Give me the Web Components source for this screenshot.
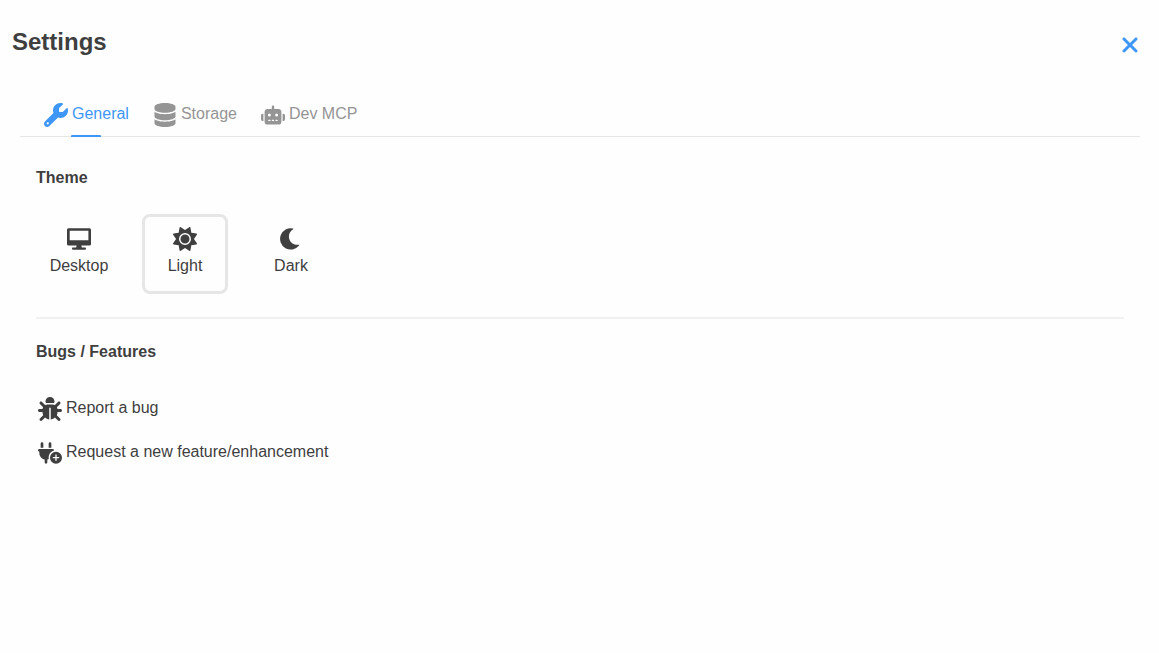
<!DOCTYPE html>
<html lang="en">
<head>
<meta charset="utf-8">
<title>Settings</title>
<style>
  body {
    margin: 0;
    background: #fefefe;
    color: #3f3f3f;
    font: 16px/24px "Liberation Sans", Arial, sans-serif;
    --primary: #3e97f6;
    --muted: #959595;
    --line: #e6e6e6;
    --line-soft: #f1f1f1;
  }
</style>
</head>
<body>
<settings-dialog heading="Settings">
  <tab-bar slot="tabs">
    <tab-item icon="wrench" active>General</tab-item>
    <tab-item icon="database">Storage</tab-item>
    <tab-item icon="robot">Dev MCP</tab-item>
  </tab-bar>
  <settings-section heading="Theme">
    <theme-picker value="light"></theme-picker>
  </settings-section>
  <settings-section heading="Bugs / Features">
    <icon-link icon="bug" href="#bug">Report a bug</icon-link>
    <icon-link icon="plug" href="#feature">Request a new feature/enhancement</icon-link>
  </settings-section>
</settings-dialog>

<script>
// name: [viewBox, path]
const icons = {
  wrench: ['0 0 512 512', 'M352 320c88.4 0 160-71.6 160-160c0-15.3-2.2-30.1-6.2-44.2c-3.1-10.8-16.4-13.2-24.3-5.3l-76.8 76.8c-3 3-7.1 4.7-11.3 4.7H336c-8.8 0-16-7.2-16-16V118.6c0-4.2 1.7-8.3 4.7-11.3l76.8-76.8c7.9-7.9 5.4-21.2-5.3-24.3C382.1 2.2 367.3 0 352 0C263.6 0 192 71.6 192 160c0 19.1 3.4 37.5 9.5 54.5L19.9 396.1C7.2 408.8 0 426.1 0 444.1C0 481.6 30.4 512 67.9 512c18 0 35.3-7.2 48-19.9L297.5 310.5c17 6.2 35.4 9.5 54.5 9.5zM80 408a24 24 0 1 1 0 48 24 24 0 1 1 0-48z'],
  database: ['0 0 448 512', 'M448 80v48c0 44.2-100.3 80-224 80S0 172.2 0 128V80C0 35.8 100.3 0 224 0S448 35.8 448 80zM393.2 214.7c20.8-7.4 39.9-16.9 54.8-28.6V288c0 44.2-100.3 80-224 80S0 332.2 0 288V186.1c14.9 11.8 34 21.2 54.8 28.6C99.7 230.7 159.5 240 224 240s124.3-9.3 169.2-25.3zM0 346.1c14.9 11.8 34 21.2 54.8 28.6C99.7 390.7 159.5 400 224 400s124.3-9.3 169.2-25.3c20.8-7.4 39.9-16.9 54.8-28.6V432c0 44.2-100.3 80-224 80S0 476.2 0 432V346.1z'],
  robot: ['0 0 640 512', 'M320 0c17.7 0 32 14.3 32 32V96H472c39.8 0 72 32.2 72 72V440c0 39.8-32.2 72-72 72H168c-39.8 0-72-32.2-72-72V168c0-39.8 32.2-72 72-72H288V32c0-17.7 14.3-32 32-32zM208 384c-8.8 0-16 7.2-16 16s7.2 16 16 16h32c8.8 0 16-7.2 16-16s-7.2-16-16-16H208zm96 0c-8.8 0-16 7.2-16 16s7.2 16 16 16h32c8.8 0 16-7.2 16-16s-7.2-16-16-16H304zm96 0c-8.8 0-16 7.2-16 16s7.2 16 16 16h32c8.8 0 16-7.2 16-16s-7.2-16-16-16H400zM264 256a40 40 0 1 0 -80 0 40 40 0 1 0 80 0zm152 40a40 40 0 1 0 0-80 40 40 0 1 0 0 80zM48 224H64V416H48c-26.5 0-48-21.5-48-48V272c0-26.5 21.5-48 48-48zm544 0c26.5 0 48 21.5 48 48v96c0 26.5-21.5 48-48 48H576V224h16z'],
  desktop: ['0 0 24 24', 'M1.5 1.3H22.5Q24 1.3 24 2.8V17Q24 18.6 22.5 18.6H14.4L14.8 20.6H18.2Q19 20.6 19 21.6T18.2 22.7H5.8Q5 22.7 5 21.6T5.8 20.6H9.2L9.6 18.6H1.5Q0 18.6 0 17V2.8Q0 1.3 1.5 1.3zM2.7 3.8V13.3H21.4V3.8z'],
  sun: ['0 0 512 512', 'M361.5 1.2c5 2.1 8.6 6.6 9.6 11.9L391 121l107.9 19.8c5.3 1 9.8 4.6 11.9 9.6s1.5 10.7-1.6 15.2L446.9 256l62.3 90.3c3.1 4.5 3.7 10.2 1.6 15.2s-6.6 8.6-11.9 9.6L391 391 371.1 498.9c-1 5.3-4.6 9.8-9.6 11.9s-10.7 1.5-15.2-1.6L256 446.9l-90.3 62.3c-4.5 3.1-10.2 3.7-15.2 1.6s-8.6-6.6-9.6-11.9L121 391 13.1 371.1c-5.3-1-9.8-4.6-11.9-9.6s-1.5-10.7 1.6-15.2L65.1 256 2.8 165.7c-3.1-4.5-3.7-10.2-1.6-15.2s6.6-8.6 11.9-9.6L121 121 140.9 13.1c1-5.3 4.6-9.8 9.6-11.9s10.7-1.5 15.2 1.6L256 65.1 346.3 2.8c4.5-3.1 10.2-3.7 15.2-1.6zM160 256a96 96 0 1 1 192 0 96 96 0 1 1 -192 0zm224 0a128 128 0 1 0 -256 0 128 128 0 1 0 256 0z'],
  moon: ['0 0 24 24', 'M14 1.4A10.7 10.7 0 1 0 20.1 18.6Q20.7 17.8 19.7 17.7C14 18.2 9.9 14.6 9.9 9.4C9.9 6.3 11.6 3.7 14.2 2.2Q14.8 1.6 14 1.4z'],
  bug: ['0 0 512 512', 'M256 0c53 0 96 43 96 96v3.6c0 15.7-12.7 28.4-28.4 28.4H188.4c-15.7 0-28.4-12.7-28.4-28.4V96c0-53 43-96 96-96zM41.4 105.4c12.5-12.5 32.8-12.5 45.3 0l64 64c.7 .7 1.3 1.4 1.9 2.1c14.2-7.3 30.4-11.4 47.5-11.4H312c17.1 0 33.2 4.1 47.5 11.4c.6-.7 1.2-1.4 1.9-2.1l64-64c12.5-12.5 32.8-12.5 45.3 0s12.5 32.8 0 45.3l-64 64c-.7 .7-1.4 1.3-2.1 1.9c6.2 12 10.1 25.3 11.1 39.5H480c17.7 0 32 14.3 32 32s-14.3 32-32 32H416c0 24.6-5.5 47.8-15.4 68.6c2.2 1.3 4.2 2.9 6 4.8l64 64c12.5 12.5 12.5 32.8 0 45.3s-32.8 12.5-45.3 0l-63.1-63.1c-24.5 21.8-55.8 36.2-90.3 39.6V240c0-8.8-7.2-16-16-16s-16 7.2-16 16V479.2c-34.5-3.4-65.8-17.8-90.3-39.6L86.6 502.6c-12.5 12.5-32.8 12.5-45.3 0s-12.5-32.8 0-45.3l64-64c1.9-1.9 3.9-3.4 6-4.8C101.5 367.8 96 344.6 96 320H32c-17.7 0-32-14.3-32-32s14.3-32 32-32H96.3c1.1-14.1 5-27.5 11.1-39.5c-.7-.6-1.4-1.2-2.1-1.9l-64-64c-12.5-12.5-12.5-32.8 0-45.3z'],
  plug: ['0 0 576 512', 'M96 0C78.3 0 64 14.3 64 32v96h64V32c0-17.7-14.3-32-32-32zM288 0c-17.7 0-32 14.3-32 32v96h64V32c0-17.7-14.3-32-32-32zM32 160c-17.7 0-32 14.3-32 32s14.3 32 32 32v32c0 77.4 55 142 128 156.8V480c0 17.7 14.3 32 32 32s32-14.3 32-32V412.8c12.3-2.5 24.1-6.4 35.1-11.5c-2.1-10.8-3.1-21.9-3.1-33.3c0-80.3 53.8-148 127.3-169.2c.5-2.2 .7-4.5 .7-6.8c0-17.7-14.3-32-32-32H32zM432 512a144 144 0 1 0 0-288 144 144 0 1 0 0 288zm16-208v48h48c8.8 0 16 7.2 16 16s-7.2 16-16 16H448v48c0 8.8-7.2 16-16 16s-16-7.2-16-16V384H368c-8.8 0-16-7.2-16-16s7.2-16 16-16h48V304c0-8.8 7.2-16 16-16s16 7.2 16 16z'],
  close: ['0 0 384 512', 'M342.6 150.6c12.5-12.5 12.5-32.8 0-45.3s-32.8-12.5-45.3 0L192 210.7 86.6 105.4c-12.5-12.5-32.8-12.5-45.3 0s-12.5 32.8 0 45.3L146.7 256 41.4 361.4c-12.5 12.5-12.5 32.8 0 45.3s32.8 12.5 45.3 0L192 301.3 297.4 406.6c12.5 12.5 32.8 12.5 45.3 0s12.5-32.8 0-45.3L237.3 256 342.6 150.6z'],
};

class UiIcon extends HTMLElement {
  constructor() {
    super();
    this.attachShadow({ mode: 'open' });
  }

  connectedCallback() {
    const [viewBox, path] = icons[this.getAttribute('name')];
    this.shadowRoot.innerHTML = `
      <style>
        :host { display: block; flex: none; width: 24px; height: 24px; }
        svg { display: block; width: 100%; height: 100%; fill: currentColor; }
      </style>
      <svg viewBox="${viewBox}" aria-hidden="true"><path fill-rule="evenodd" d="${path}"/></svg>
    `;
  }
}

class TabBar extends HTMLElement {
  constructor() {
    super();
    this.attachShadow({ mode: 'open' }).innerHTML = `
      <style>
        :host { display: block; }
        nav {
          display: flex;
          gap: 24px;
          padding: 0 24px;
          border-bottom: 1px solid var(--line);
        }
      </style>
      <nav><slot></slot></nav>
    `;
    this.addEventListener('click', (e) => {
      const tab = e.target.closest('tab-item');
      if (!tab) return;
      this.querySelectorAll('tab-item').forEach((t) => t.toggleAttribute('active', t === tab));
    });
  }
}

class TabItem extends HTMLElement {
  constructor() {
    super();
    this.attachShadow({ mode: 'open' });
  }

  connectedCallback() {
    this.shadowRoot.innerHTML = `
      <style>
        :host { display: block; color: var(--muted); }
        :host([active]) { color: var(--primary); }
        button {
          position: relative;
          display: flex;
          align-items: center;
          gap: 4px;
          padding: 9px 0;
          border: 0;
          background: none;
          color: inherit;
          font: inherit;
          cursor: pointer;
        }
        ui-icon { margin-top: 2px; }
        /* sits on top of the bar's bottom border */
        :host([active]) button::after {
          content: '';
          position: absolute;
          left: 0;
          right: 0;
          bottom: -1px;
          width: 30px;
          height: 2px;
          margin: 0 auto;
          border-radius: 1px 1px 0 0;
          background: var(--primary);
        }
      </style>
      <button type="button">
        <ui-icon name="${this.getAttribute('icon')}"></ui-icon>
        <span><slot></slot></span>
      </button>
    `;
  }
}

class SettingsSection extends HTMLElement {
  constructor() {
    super();
    this.attachShadow({ mode: 'open' });
  }

  connectedCallback() {
    this.shadowRoot.innerHTML = `
      <style>
        :host { display: block; }
        :host(:not(:last-of-type)) {
          padding-bottom: 23px;
          margin-bottom: 21px;
          border-bottom: 2px solid var(--line-soft);
        }
        h2 { margin: 0 0 24px; font-size: 16px; line-height: 24px; }
      </style>
      <section>
        <h2>${this.getAttribute('heading')}</h2>
        <slot></slot>
      </section>
    `;
  }
}

class ThemePicker extends HTMLElement {
  constructor() {
    super();
    this.attachShadow({ mode: 'open' });
  }

  connectedCallback() {
    const themes = [
      ['desktop', 'desktop', 'Desktop'],
      ['light', 'sun', 'Light'],
      ['dark', 'moon', 'Dark'],
    ];
    const value = this.getAttribute('value');
    this.shadowRoot.innerHTML = `
      <style>
        :host { display: flex; flex-wrap: wrap; gap: 20px; }
        label {
          position: relative;
          box-sizing: border-box;
          display: flex;
          flex-direction: column;
          align-items: center;
          gap: 3px;
          width: 86px;
          height: 80px;
          padding-top: 10px;
          border: 3px solid transparent;
          border-radius: 8px;
          cursor: pointer;
        }
        label:has(:checked) { border-color: var(--line); }
        input {
          appearance: none;
          position: absolute;
          inset: 0;
          margin: 0;
          cursor: pointer;
        }
      </style>
      ${themes.map(([id, icon, text]) => `
        <label>
          <input type="radio" name="theme" value="${id}" ${id === value ? 'checked' : ''}>
          <ui-icon name="${icon}"></ui-icon>
          <span>${text}</span>
        </label>
      `).join('')}
    `;
  }
}

class IconLink extends HTMLElement {
  constructor() {
    super();
    this.attachShadow({ mode: 'open' });
  }

  connectedCallback() {
    this.shadowRoot.innerHTML = `
      <style>
        :host { display: flex; align-items: center; height: 40px; margin-bottom: 4px; }
        a {
          display: flex;
          align-items: center;
          gap: 4px;
          padding: 0 2px;
          color: inherit;
          text-decoration: none;
        }
        ui-icon { margin-top: 2px; }
      </style>
      <a href="${this.getAttribute('href')}">
        <ui-icon name="${this.getAttribute('icon')}"></ui-icon>
        <span><slot></slot></span>
      </a>
    `;
  }
}

class SettingsDialog extends HTMLElement {
  constructor() {
    super();
    this.attachShadow({ mode: 'open' });
  }

  connectedCallback() {
    this.shadowRoot.innerHTML = `
      <style>
        :host { display: block; }
        header {
          display: flex;
          align-items: flex-start;
          justify-content: space-between;
          padding: 24px 12px 30px;
        }
        h1 { margin: 0; font-size: 24px; line-height: 36px; }
        button {
          display: grid;
          place-items: center;
          width: 34px;
          height: 34px;
          margin: 4px 0 0;
          padding: 0;
          border: 0;
          background: none;
          color: var(--primary);
          cursor: pointer;
        }
        main { padding: 0 19px 0 20px; }
        .panel { padding: 29px 16px; }
      </style>
      <header>
        <h1>${this.getAttribute('heading')}</h1>
        <button type="button" aria-label="Close"><ui-icon name="close"></ui-icon></button>
      </header>
      <main>
        <slot name="tabs"></slot>
        <div class="panel"><slot></slot></div>
      </main>
    `;
    this.shadowRoot.querySelector('button').addEventListener('click', () => {
      this.dispatchEvent(new CustomEvent('close'));
    });
  }
}

customElements.define('ui-icon', UiIcon);
customElements.define('tab-bar', TabBar);
customElements.define('tab-item', TabItem);
customElements.define('settings-section', SettingsSection);
customElements.define('theme-picker', ThemePicker);
customElements.define('icon-link', IconLink);
customElements.define('settings-dialog', SettingsDialog);
</script>
</body>
</html>
